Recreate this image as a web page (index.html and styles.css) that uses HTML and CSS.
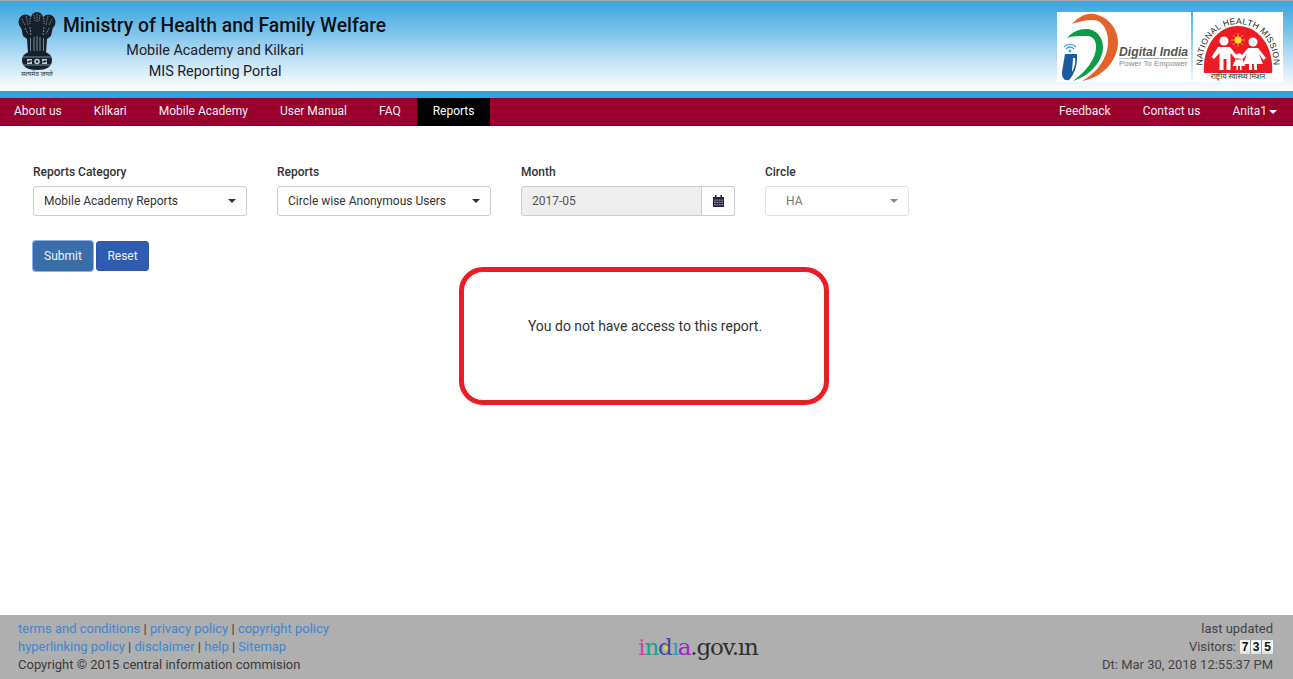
FILE: index.html
```html
<!DOCTYPE html>
<html lang="en">
<head>
<meta charset="utf-8">
<title>MIS Reporting Portal</title>
<link rel="stylesheet" href="styles.css">
</head>
<body>
<div class="page">
  <header class="masthead">
    <div class="brand">
      <svg class="emblem" width="38" height="65" viewBox="0 0 38 65">
        <g fill="#16202c">
          <ellipse cx="19" cy="6" rx="6" ry="6"/>
          <ellipse cx="7.500" cy="10" rx="7" ry="7.500"/>
          <ellipse cx="30.500" cy="10" rx="7" ry="7.500"/>
          <path d="M3 15 L12 8 L26 8 L35 15 L33 24 L29 27 L28 41 L10 41 L9 27 L5 24Z"/>
          <path d="M4 48 C4 42 10 39 19 39 C28 39 34 42 34 48 C34 55 28 58 19 58 C10 58 4 55 4 48Z"/>
        </g>
        <g fill="none" stroke="#8ba3b5" stroke-width=".8">
          <path d="M4 7 L7 13 M8 4 L10 13 M12 6 L12 12 M26 6 L26 12 M30 4 L28 13 M34 7 L31 13" stroke-dasharray="1.500 1"/>
          <path d="M16 3 L17 9 M19 2 V10 M22 3 L21 9" stroke-dasharray="1.500 1"/>
          <path d="M7 16 L10 22 M12 15 L13 24 M26 15 L25 24 M31 16 L28 22" stroke-dasharray="2 1"/>
          <path d="M12.500 26 V39 M16 25 V39 M19 24 V39 M22 25 V39 M25.500 26 V39"/>
          <path d="M5 45 H33 M5 53 H33"/>
        </g>
        <g fill="#c3d0d8">
          <path d="M9 47 h5 v1.500 h-3.500 v1 h3.500 v2.500 h-5 v-1.500 h3.500 v-1 h-3.500z"/>
          <circle cx="19" cy="49.500" r="2.800"/>
          <path d="M24 47 h5 v1.500 h-3.500 v1 h3.500 v2.500 h-5 v-1.500 h3.500 v-1 h-3.500z"/>
        </g>
        <circle cx="19" cy="49.500" r="1.200" fill="#16202c"/>
        <text x="19" y="64" text-anchor="middle" class="motto">सत्यमेव जयते</text>
      </svg>
      <div class="titles">
        <div class="title-main">Ministry of Health and Family Welfare</div>
        <div class="title-sub">Mobile Academy and Kilkari</div>
        <div class="title-sub">MIS Reporting Portal</div>
      </div>
    </div>
    <div class="logos">
      <svg class="logo" width="134" height="70" viewBox="0 0 134 70">
        <rect width="134" height="70" fill="#fff"/>
        <path d="M15 12 C22 4 30 1 37 2 C50 4 61 16 61 30 C61 50 44 66 25 69 C38 62 50 48 51 32 C52 20 46 8 36 8 C28 8 21 10 15 12Z" fill="#e4632d"/>
        <path d="M10 26 C15 20 22 17 29 17 C39 17 46 25 46 35 C46 50 32 64 16 69 C28 60 39 48 39 35 C39 28 36 24 30 24 C22 24 15 24 10 26Z" fill="#0d9b48"/>
        <path d="M8 42 H20 C21 50 18 62 12 68 C7 69 5 66 5 60Z" fill="#1a5a9e"/>
        <path d="M16 46 H18 C19 51 17 57 15 60 C15 56 16 50 16 46Z" fill="#fff"/>
        <path d="M7 35 A8 8 0 0 1 19 35 M9 37 A5 5 0 0 1 17 37" fill="none" stroke="#3fa9dc" stroke-width="1.300"/>
        <circle cx="13" cy="39" r="1.500" fill="#3fa9dc"/>
        <text x="62" y="44" class="di-name">Digital India</text>
        <path d="M62 46.500 H131" stroke="#888" stroke-width=".6"/>
        <text x="62" y="54" class="di-tag">Power To Empower</text>
      </svg>
      <svg class="logo" width="90" height="70" viewBox="0 0 90 70">
        <rect width="90" height="70" fill="#fff"/>
        <defs><path id="nhm-arc" d="M10 60 C6 32 23 12 45 12 C67 12 84 32 80 60"/></defs>
        <text class="nhm-arc"><textPath href="#nhm-arc" startOffset="50%" text-anchor="middle">NATIONAL HEALTH MISSION</textPath></text>
        <path d="M11 61 C9 35 24 14 45 14 C66 14 81 35 79 61Z" fill="#ed1c24"/>
        <path d="M45 21 V35 M38 28 H52 M40 23 L50 33 M50 23 L40 33" stroke="#ffb51a" stroke-width=".8"/>
        <circle cx="45" cy="28" r="3.500" fill="#ffe21a"/>
        <g fill="#fff">
          <circle cx="31" cy="29" r="4.500"/>
          <path d="M25 35 H37 L45 45 L42.500 47 L37.500 41 V58 H33.500 V47 H30.500 V58 H26.500 V41 L21 47 L18.500 45Z"/>
          <circle cx="60" cy="30" r="4.500"/>
          <path d="M55 36 H65 L73 46 L70.500 48 L66 42 L70 52 H64 V58 H61 V52 H59 V58 H56 V52 H50 L54 42 L49 48 L46.500 46Z"/>
          <circle cx="46" cy="44" r="2.800"/>
          <path d="M42.500 47.500 H49.500 L52.500 54 H48.500 V58 H47 V54 H45 V58 H43.500 V54 H39.500Z"/>
        </g>
        <text x="45" y="67" text-anchor="middle" class="nhm-hi">राष्ट्रीय स्वास्थ्य मिशन</text>
      </svg>
    </div>
  </header>
  <div class="strip"></div>
  <nav class="nav">
    <ul class="nav-list">
      <li><a class="nav-link">About us</a></li>
      <li><a class="nav-link">Kilkari</a></li>
      <li><a class="nav-link">Mobile Academy</a></li>
      <li><a class="nav-link">User Manual</a></li>
      <li><a class="nav-link">FAQ</a></li>
      <li><a class="nav-link active">Reports</a></li>
    </ul>
    <ul class="nav-list">
      <li><a class="nav-link">Feedback</a></li>
      <li><a class="nav-link">Contact us</a></li>
      <li><a class="nav-link">Anita1<span class="nav-caret"></span></a></li>
    </ul>
  </nav>
  <main class="main">
    <form class="filters">
      <div class="field">
        <div class="field-label">Reports Category</div>
        <div class="select"><span>Mobile Academy Reports</span><span class="caret"></span></div>
      </div>
      <div class="field">
        <div class="field-label">Reports</div>
        <div class="select"><span>Circle wise Anonymous Users</span><span class="caret"></span></div>
      </div>
      <div class="field">
        <div class="field-label">Month</div>
        <div class="date-group">
          <div class="date-input">2017-05</div>
          <div class="date-btn">
            <svg width="11" height="12" viewBox="0 0 11 12"><path fill="#2a1f3d" d="M0 2 H2 V0 H3.500 V2 H7.500 V0 H9 V2 H11 V12 H0Z"/><path fill="#8d86a0" d="M1 4.500h1.800v1.200H1zM3.400 4.500h1.800v1.200H3.400zM5.800 4.500h1.800v1.200H5.800zM8.200 4.500h1.800v1.200H8.200zM1 6.800h1.800v1.200H1zM3.400 6.800h1.800v1.200H3.400zM5.800 6.800h1.800v1.200H5.800zM8.200 6.800h1.800v1.200H8.200zM1 9.100h1.800v1.200H1zM3.400 9.100h1.800v1.200H3.400zM5.800 9.100h1.800v1.200H5.800zM8.200 9.100h1.800v1.200H8.200z"/></svg>
          </div>
        </div>
      </div>
      <div class="field field-small">
        <div class="field-label">Circle</div>
        <div class="select disabled"><span class="indent">HA</span><span class="caret"></span></div>
      </div>
    </form>
    <div class="actions">
      <button class="btn btn-focus" type="button">Submit</button>
      <button class="btn btn-reset" type="button">Reset</button>
    </div>
    <div class="notice">You do not have access to this report.</div>
  </main>
  <footer class="footer">
    <div class="foot-left">
      <div><a class="foot-link">terms and conditions</a> | <a class="foot-link">privacy policy</a> | <a class="foot-link">copyright policy</a></div>
      <div><a class="foot-link">hyperlinking policy</a> | <a class="foot-link">disclaimer</a> | <a class="foot-link">help</a> | <a class="foot-link">Sitemap</a></div>
      <div>Copyright © 2015 central information commision</div>
    </div>
    <div class="foot-mid">
      <span class="c1">i</span><span class="c2">n</span><span class="c3">d</span><span class="c4">ı</span><span class="c5">a</span><span class="gov">.gov.ın</span>
    </div>
    <div class="foot-right">
      <div>last updated</div>
      <div class="visitors">Visitors: <span class="counter"><b class="digit">7</b><b class="digit">3</b><b class="digit">5</b></span></div>
      <div>Dt: Mar 30, 2018 12:55:37 PM</div>
    </div>
  </footer>
</div>
</body>
</html>
```
FILE: styles.css
```css
* { box-sizing: border-box; }
html, body { margin: 0; padding: 0; }
body {
  font-family: Roboto, "Liberation Sans", sans-serif;
  font-size: 12px;
  color: #333;
  background: #fff;
}
.page { height: 679px; display: flex; flex-direction: column; overflow: hidden; }

.masthead {
  height: 91px;
  flex: none;
  display: flex;
  justify-content: space-between;
  padding: 11px 10px 0 18px;
  border-top: 1px solid #a3a9ad;
  background: linear-gradient(#38a5e0 0%, #7cc3ea 35%, #bfe1f5 65%, #ffffff 100%);
}
.brand { display: flex; align-items: flex-start; }
.emblem { flex: none; margin-right: 7px; overflow: visible; }
.motto { font: 6.500px "Noto Sans", "DejaVu Sans", sans-serif; fill: #333; }
.titles { display: flex; flex-direction: column; align-items: center; padding-top: 1px; }
.title-main { font-size: 19.300px; font-weight: 500; line-height: 25px; color: #0c0f14; margin-bottom: 3px; }
.title-sub { font-size: 14.400px; line-height: 20px; color: #1d2126; margin-bottom: 1px; padding-right: 19px; }
.logos { display: flex; gap: 2px; }
.logo { display: block; }
.di-name { font: italic 700 12.200px "Liberation Sans", sans-serif; fill: #555; }
.di-tag { font: 7.900px "Liberation Sans", sans-serif; fill: #888; }
.nhm-arc { font: 8.500px "Liberation Sans", sans-serif; letter-spacing: .3px; fill: #222; }
.nhm-hi { font: 7.500px "Noto Sans", "DejaVu Sans", sans-serif; fill: #333; }

.strip { height: 7px; flex: none; background: #2fa4e0; }

.nav {
  height: 28px;
  flex: none;
  display: flex;
  justify-content: space-between;
  background: #99002e;
}
.nav-list { list-style: none; display: flex; margin: 0; padding: 0; }
.nav-link {
  display: flex;
  align-items: center;
  height: 28px;
  padding: 0 16px 3px 16px;
  color: #f4eef4;
  font-size: 12px;
}
.nav-list:first-child li:first-child .nav-link { padding-left: 14px; }
.nav-link.active { background: #000; color: #fff; }
.nav-caret {
  margin-left: 2px;
  margin-top: 2px;
  border-top: 4px solid #fff;
  border-left: 4px solid transparent;
  border-right: 4px solid transparent;
}

.main { flex: 1; padding: 38px 33px 0; position: relative; }
.filters { display: flex; gap: 30px; }
.field { width: 214px; }
.field-small { width: 144px; }
.field-label { font-weight: 500; font-size: 12px; line-height: 17px; margin-bottom: 5px; color: #333; letter-spacing: -.02px; }
.select {
  height: 30px;
  display: flex;
  align-items: center;
  justify-content: space-between;
  padding: 0 10px;
  border: 1px solid #ccc;
  border-radius: 3px;
  background: #fff;
  color: #333;
}
.caret {
  border-top: 4px solid #333;
  border-left: 4px solid transparent;
  border-right: 4px solid transparent;
}
.select.disabled { border-color: #e2e2e2; color: #777; }
.select.disabled .caret { border-top-color: #888; }
.indent { padding-left: 10px; }
.date-group { display: flex; height: 30px; }
.date-input {
  flex: 1;
  display: flex;
  align-items: center;
  padding: 0 10px;
  color: #555;
  background: #eee;
  border: 1px solid #ccc;
  border-radius: 3px 0 0 3px;
}
.date-btn {
  width: 33px;
  display: flex;
  align-items: center;
  justify-content: center;
  border: 1px solid #ccc;
  border-left: 0;
  border-radius: 0 3px 3px 0;
}
.actions { display: flex; gap: 3px; margin-top: 25px; }
.btn {
  height: 30px;
  padding: 0;
  border: 1px solid #2e56ac;
  border-radius: 3px;
  background: #2f5bb0;
  color: #eef2fa;
  font: 12px Roboto, sans-serif;
  width: 53px;
}
.btn-focus { width: 60px; background: #3a6ea8; border-color: #3a6ea8; box-shadow: 0 0 0 1px #8fb0ee; }
.notice {
  width: 370px;
  height: 138px;
  margin: -4px 0 0 426px;
  display: flex;
  align-items: flex-start;
  justify-content: center;
  padding: 44px 0 0 2px;
  border: 5px solid #ed1c24;
  border-radius: 24px;
  font-size: 14px;
  line-height: 20px;
}

.footer {
  height: 64px;
  flex: none;
  display: grid;
  grid-template-columns: 1fr 1fr 1fr;
  padding: 5px 20px 0 18px;
  background: #afafaf;
  font-size: 13px;
  line-height: 18px;
  color: #3a3a3a;
}
.foot-link { color: #4285d0; }
.foot-mid {
  display: flex;
  align-items: baseline;
  padding: 11px 0 0 202px;
  font-family: "DejaVu Serif", serif;
  font-size: 23px;
  letter-spacing: -1.200px;
  line-height: 32px;
  white-space: nowrap;
}
.c1 { color: #d6409f; }
.c2 { color: #18a38c; }
.c3 { color: #3b4aa8; position: relative; }
.c3::after {
  content: "";
  position: absolute;
  left: 6px;
  top: 15px;
  width: 4px;
  height: 4px;
  border-radius: 50%;
  background: #f2d21e;
}
.c4 { color: #2a9fc0; }
.c5 { color: #a31fd0; }
.gov { color: #2f2f2f; }
.foot-right { text-align: right; color: #444; }
.visitors { display: flex; justify-content: flex-end; align-items: center; gap: 4px; }
.counter { display: inline-flex; }
.digit {
  width: 11px;
  height: 14px;
  text-align: center;
  font: 700 12px/14px "Liberation Sans", sans-serif;
  color: #111;
  background: linear-gradient(#eee, #fff 50%, #ddd);
  border-right: 1px solid #999;
}
.digit:last-child { border-right: 0; }
```
